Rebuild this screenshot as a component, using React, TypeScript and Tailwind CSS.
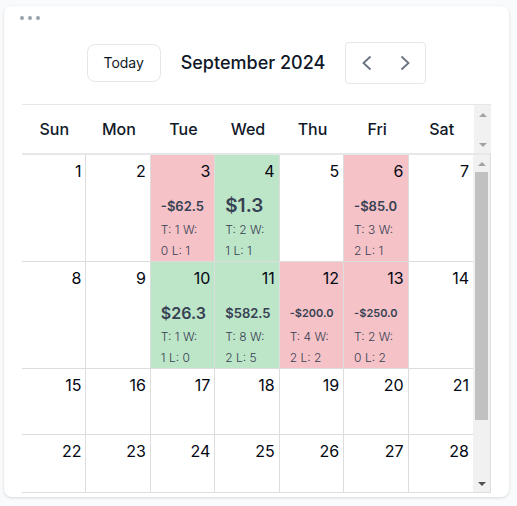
type Tone = "loss" | "gain";

interface DayResult {
  tone: Tone;
  amount: string;
  amountClass: string;
  trades: number;
  wins: number;
  losses: number;
}

const weekdays = ["Sun", "Mon", "Tue", "Wed", "Thu", "Fri", "Sat"];

const weeks = [
  { first: 1, height: "h-[107px]" },
  { first: 8, height: "h-[107px]" },
  { first: 15, height: "h-[66px]" },
  { first: 22, height: "h-[58px]" },
];

const results: Record<number, DayResult> = {
  3: { tone: "loss", amount: "-$62.5", amountClass: "text-[13px]", trades: 1, wins: 0, losses: 1 },
  4: { tone: "gain", amount: "$1.3", amountClass: "text-[19px]", trades: 2, wins: 1, losses: 1 },
  6: { tone: "loss", amount: "-$85.0", amountClass: "text-[13px]", trades: 3, wins: 2, losses: 1 },
  10: { tone: "gain", amount: "$26.3", amountClass: "text-[16px]", trades: 1, wins: 1, losses: 0 },
  11: { tone: "gain", amount: "$582.5", amountClass: "text-[13px]", trades: 8, wins: 2, losses: 5 },
  12: { tone: "loss", amount: "-$200.0", amountClass: "text-[11px]", trades: 4, wins: 2, losses: 2 },
  13: { tone: "loss", amount: "-$250.0", amountClass: "text-[11px]", trades: 2, wins: 0, losses: 2 },
};

const toneClass: Record<Tone, string> = {
  loss: "bg-[#f5c2c7]",
  gain: "bg-[#bde5c8]",
};

function DayCell({ day }: { day: number }) {
  const result = results[day];
  return (
    <td
      className={`border-b border-[#dddddd] p-0 align-top not-last:border-r ${
        result ? toneClass[result.tone] : "bg-white"
      }`}
    >
      <div className="pt-1 pr-1 text-right text-base leading-6 text-gray-950">{day}</div>
      {result && (
        <div className="mt-[11px] pl-[10px] text-gray-700">
          <div className={`font-semibold leading-6 whitespace-nowrap ${result.amountClass}`}>
            {result.amount}
          </div>
          <div className="pt-px text-[12px] leading-[21px] font-light">
            T: {result.trades} W:
            <br />
            {result.wins} L: {result.losses}
          </div>
        </div>
      )}
    </td>
  );
}

function Arrow({ up, dark }: { up?: boolean; dark?: boolean }) {
  return (
    <svg
      width="8"
      height="4"
      viewBox="0 0 8 4"
      className={dark ? "text-[#505050]" : "text-[#a3a3a3]"}
      fill="currentColor"
      aria-hidden="true"
    >
      <path d={up ? "M0 4 4 0 8 4Z" : "M0 0 4 4 8 0Z"} />
    </svg>
  );
}

function Chevron({ right }: { right?: boolean }) {
  return (
    <svg width="12" height="16" viewBox="0 0 12 16" fill="none" stroke="currentColor" strokeWidth="1.8" aria-hidden="true">
      <path d={right ? "M2.5 1.5 9.5 8 2.5 14.5" : "M10.5 1.5 3.5 8 10.5 14.5"} />
    </svg>
  );
}

export default function App() {
  return (
    <main className="min-h-screen bg-[#f8fafc] pt-[6px] pr-2 pb-[9px] pl-1 font-['Inter',sans-serif] text-gray-900">
      <section className="rounded-lg bg-white pr-[18px] pb-1 pl-[18px] shadow-[0_1px_3px_rgba(0,0,0,0.14)]">
        <button type="button" aria-label="Card options" className="-ml-0.5 flex h-6 items-center gap-1 text-[#9ca3af]">
          <span className="size-1 rounded-full bg-current" />
          <span className="size-1 rounded-full bg-current" />
          <span className="size-1 rounded-full bg-current" />
        </button>

        <header className="flex items-center justify-center pt-3 pb-5">
          <button type="button" className="h-[38px] w-[74px] rounded-lg border border-gray-200 text-sm">
            Today
          </button>
          <h1 className="mx-5 text-lg font-medium">September 2024</h1>
          <div className="flex h-[42px] w-[81px] items-center justify-between rounded border border-gray-200 px-[14px] text-gray-500">
            <button type="button" aria-label="Previous month">
              <Chevron />
            </button>
            <button type="button" aria-label="Next month">
              <Chevron right />
            </button>
          </div>
        </header>

        <div className="flex h-[49px] border-t border-gray-200">
          <table className="h-full w-full table-fixed border-separate border-spacing-0">
            <thead>
              <tr>
                {weekdays.map((name) => (
                  <th key={name} scope="col" className="p-0 text-base font-medium">
                    {name}
                  </th>
                ))}
              </tr>
            </thead>
          </table>
          <div className="flex w-[17px] shrink-0 flex-col items-center justify-between bg-[#f1f1f1] pt-2 pb-1.5">
            <Arrow up />
            <Arrow />
          </div>
        </div>

        <div className="flex border-t-2 border-r border-t-gray-200 border-r-[#dddddd]">
          <table className="w-full table-fixed border-separate border-spacing-0">
            <tbody>
              {weeks.map((week) => (
                <tr key={week.first} className={week.height}>
                  {weekdays.map((name, index) => (
                    <DayCell key={name} day={week.first + index} />
                  ))}
                </tr>
              ))}
            </tbody>
          </table>
          <div className="flex w-[17px] shrink-0 flex-col items-center border-b border-[#dddddd] bg-[#f1f1f1]">
            <div className="flex h-[17px] items-center">
              <Arrow up />
            </div>
            <div className="h-[248px] w-[13px] bg-[#c1c1c1]" />
            <div className="mt-auto flex h-[17px] items-center">
              <Arrow dark />
            </div>
          </div>
        </div>
      </section>
    </main>
  );
}
